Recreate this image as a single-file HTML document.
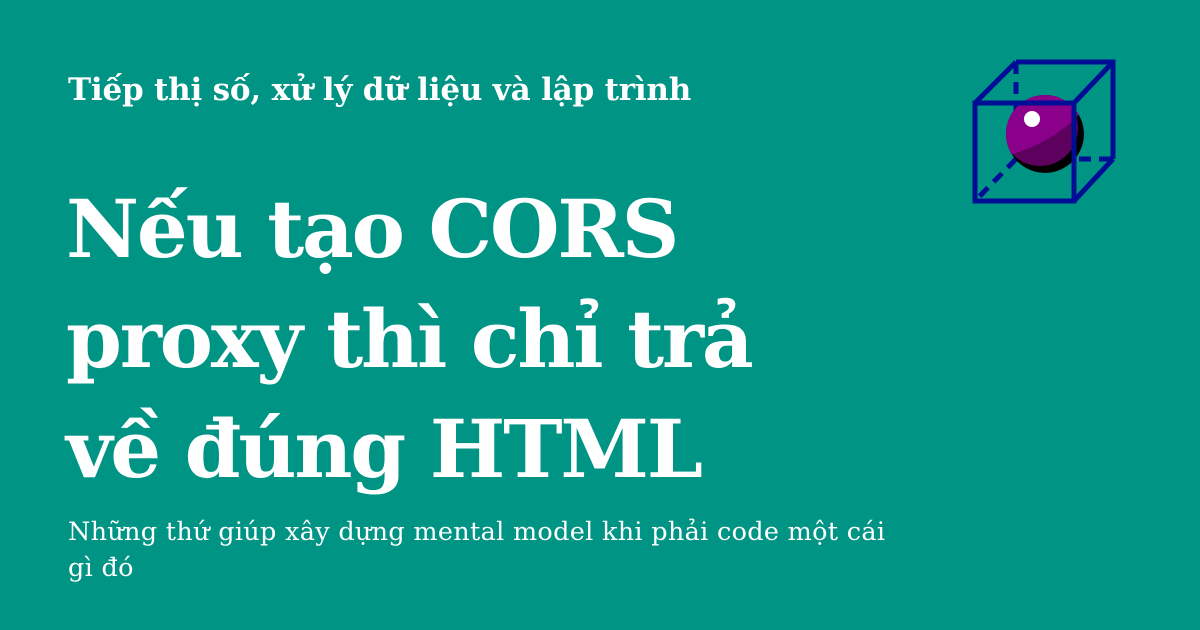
<!DOCTYPE html>
<html><head><meta charset="utf-8"><style>
body{margin:0;width:1200px;height:630px;background:#009485;overflow:hidden;position:relative;font-family:"DejaVu Serif","Liberation Serif",serif;color:#fff}
.k{position:absolute;left:68px;top:72px;font-size:31px;font-weight:bold;letter-spacing:-0.2px}
.t{position:absolute;left:66px;top:174px;font-size:80px;font-weight:bold;line-height:110px;letter-spacing:-2.2px}
.s{position:absolute;left:68px;top:514px;font-size:25.5px;line-height:36px;width:845px;letter-spacing:0.3px}
</style></head><body>
<div class="k">Tiếp thị số, xử lý dữ liệu và lập trình</div>
<div class="t">Nếu tạo CORS<br>proxy thì chỉ trả<br>về đúng HTML</div>
<div class="s">Những thứ giúp xây dựng mental model khi phải code một cái gì đó</div>
<svg style="position:absolute;left:0;top:0" width="1200" height="630">
<defs><clipPath id="c"><circle cx="1045" cy="134" r="39"/></clipPath></defs>
<g stroke="#000e96" stroke-width="5" fill="none">
<path d="M1016 62 V159 H1113 M1016 159 L975 201" stroke-dasharray="12 8"/>
</g>
<g clip-path="url(#c)">
<circle cx="1045" cy="134" r="39" fill="#000"/>
<circle cx="1040" cy="128" r="38" fill="#5e005e"/>
<path d="M1000 90 H1090 V100 Q1065 140 1000 158Z" fill="#8b008b"/>
</g>
<circle cx="1032" cy="119" r="8" fill="#fff"/>
<g stroke="#000e96" stroke-width="5" fill="none">
<rect x="975" y="103" width="99" height="98"/>
<path d="M1016 62 H1113 V159 M975 103 L1016 62 M1074 103 L1113 62 M1074 201 L1113 159"/>
</g>
</svg>
</body></html>
